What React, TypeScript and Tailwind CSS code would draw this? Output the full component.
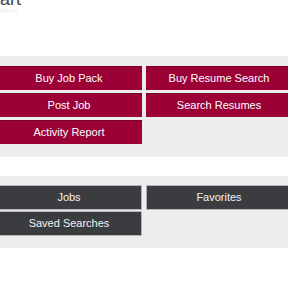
import React from "react";

const red = ["Buy Job Pack", "Buy Resume Search", "Post Job", "Search Resumes", "Activity Report"];
const dark = ["Jobs", "Favorites", "Saved Searches"];

export default function App() {
  return (
    <div className="w-[288px] h-[288px] overflow-hidden bg-white" style={{ fontFamily: '"Liberation Sans", Arial, sans-serif' }}>
      <div className="h-[7px] overflow-hidden">
        <div className="-mt-[10px] -ml-[17px] h-[18px] text-[18px] leading-[18px] text-[#444] whitespace-nowrap">Start</div>
      </div>
      <div className="h-[8px] text-[7px] leading-[8px] text-[#e8eef5]">Menu</div>
      <div className="h-[41px]" />
      <div className="bg-[#eeeeee] pt-[10px] pb-[13px]">
        <div className="-ml-[4px] w-[296px] grid grid-cols-2 gap-x-[4px] gap-y-[3px]">
          {red.map((t) => (
            <div key={t} className="h-[24px] bg-[#9b0037] border-t border-[#7a002b] flex items-center justify-center text-white text-[11px]">
              {t}
            </div>
          ))}
        </div>
      </div>
      <div className="h-[19px]" />
      <div className="bg-[#eeeeee] pt-[9px] pb-[12px]">
        <div className="-ml-[4px] w-[296px] grid grid-cols-2 gap-x-[4px] gap-y-[1px]">
          {dark.map((t) => (
            <div key={t} className="h-[25px] bg-[#3b3c40] border border-[#b5b5b7] flex items-center justify-center text-[#f2f2f2] text-[11px]">
              {t}
            </div>
          ))}
        </div>
      </div>
    </div>
  );
}
